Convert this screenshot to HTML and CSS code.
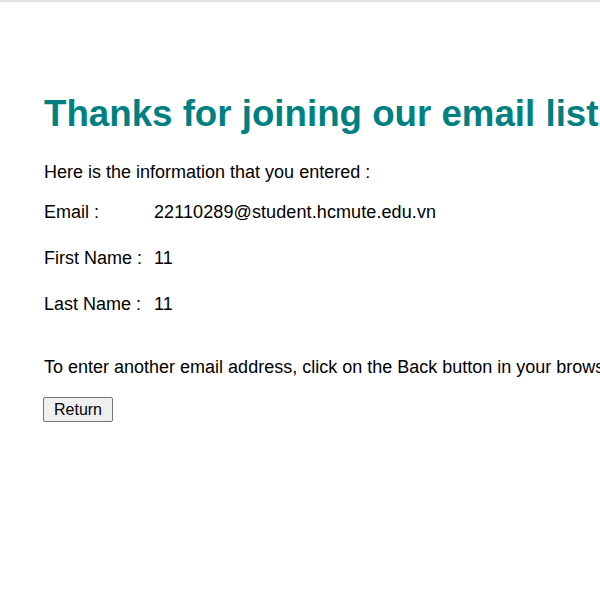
FILE: index.html
```html
<!DOCTYPE html>
<html>
<head>
<meta charset="utf-8">
<link rel="stylesheet" href="styles.css">
</head>
<body>
<div class="topline"></div>
<main class="page">
  <h1 class="title">Thanks for joining our email list</h1>
  <p class="intro">Here is the information that you entered :</p>
  <div class="info">
    <div class="row"><span class="label">Email :</span><span class="value">22110289@student.hcmute.edu.vn</span></div>
    <div class="row"><span class="label">First Name :</span><span class="value">11</span></div>
    <div class="row"><span class="label">Last Name :</span><span class="value">11</span></div>
  </div>
  <p class="note">To enter another email address, click on the Back button in your browser or the Return button shown below.</p>
  <form class="actions"><button type="button" class="btn">Return</button></form>
</main>
</body>
</html>
```
FILE: styles.css
```css
html, body { margin: 0; padding: 0; background: #fff; }
body { font-family: "Liberation Sans", Arial, sans-serif; font-size: 18px; color: #000; overflow: hidden; }
.topline { height: 2px; background: #e4e4e8; }
.page { padding: 0 0 0 44px; white-space: nowrap; }
.title { color: #008080; font-size: 36.7px; font-weight: bold; margin: 90px 0 0 0; line-height: 44px; }
.intro { margin: 25px 0 0 0; line-height: 22px; }
.info { margin-top: 18px; display: flex; flex-direction: column; gap: 24px; }
.row { display: flex; line-height: 22px; }
.label { width: 110px; }
.value { letter-spacing: 0.1px; }
.note { margin: 41px 0 0 0; line-height: 22px; }
.actions { margin-top: 19px; }
.btn { font-family: "Liberation Sans", Arial, sans-serif; font-size: 16px; padding: 2px 6px; margin: 0 0 0 -1px; height: 25px; width: 70px; background: #efefef; border: 1px solid #767676; border-radius: 2px; color: #000; }
```
